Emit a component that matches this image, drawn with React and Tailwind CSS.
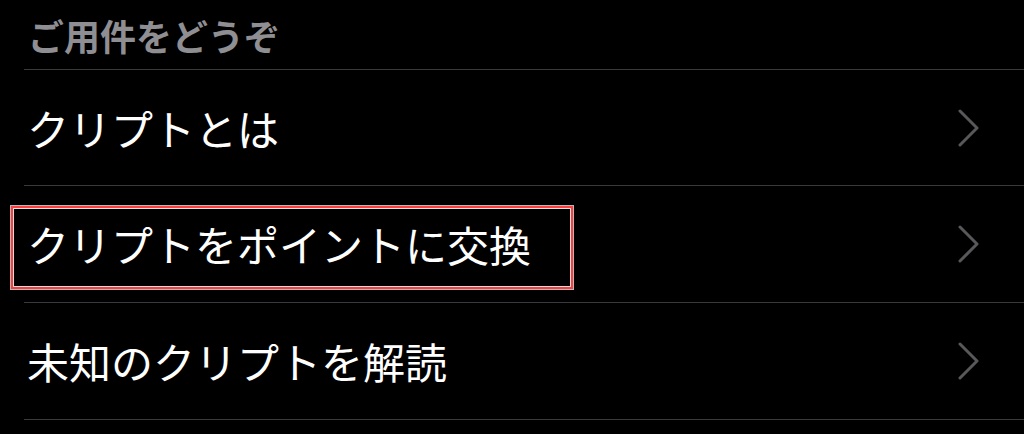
const items = [
  { id: 'about', label: 'クリプトとは', h: 'h-[116px]' },
  { id: 'exchange', label: 'クリプトをポイントに交換', h: 'h-[117px]', highlighted: true },
  { id: 'decode', label: '未知のクリプトを解読', h: 'h-[117px]' },
];

const Chevron = () => (
  <svg width="22" height="38" viewBox="0 0 22 38" fill="none" className="shrink-0">
    <polyline
      points="2,2 19,19 2,36"
      stroke="#58585a"
      strokeWidth="3"
      strokeLinecap="round"
      strokeLinejoin="round"
    />
  </svg>
);

const App = () => {
  return (
    <div
      className="w-[1024px] h-[434px] bg-black overflow-hidden"
      style={{ fontFamily: '"Noto Sans CJK JP", "Noto Sans", sans-serif' }}
    >
      <div className="ml-[24px]">
        <div className="h-[70px] border-b border-[#3a3a3c] pt-[17px] pl-[4px]">
          <h2 className="text-[36px] leading-none font-bold text-[#8e8e93]">ご用件をどうぞ</h2>
        </div>

        {items.map((item) => (
          <div
            key={item.id}
            className={`relative ${item.h} border-b border-[#3a3a3c] flex items-center justify-between pl-[3px] pr-[44px]`}
          >
            <span className="text-[42px] leading-none text-white">{item.label}</span>
            <Chevron />
            {item.highlighted && (
              <div className="absolute left-[-13px] top-[20px] w-[562px] h-[83px] border-2 border-[#ff3b3b] shadow-[0_0_0_1px_#b8b8b8,inset_0_0_0_1px_#e0e0e0] pointer-events-none" />
            )}
          </div>
        ))}
      </div>
    </div>
  );
};

export default App;
